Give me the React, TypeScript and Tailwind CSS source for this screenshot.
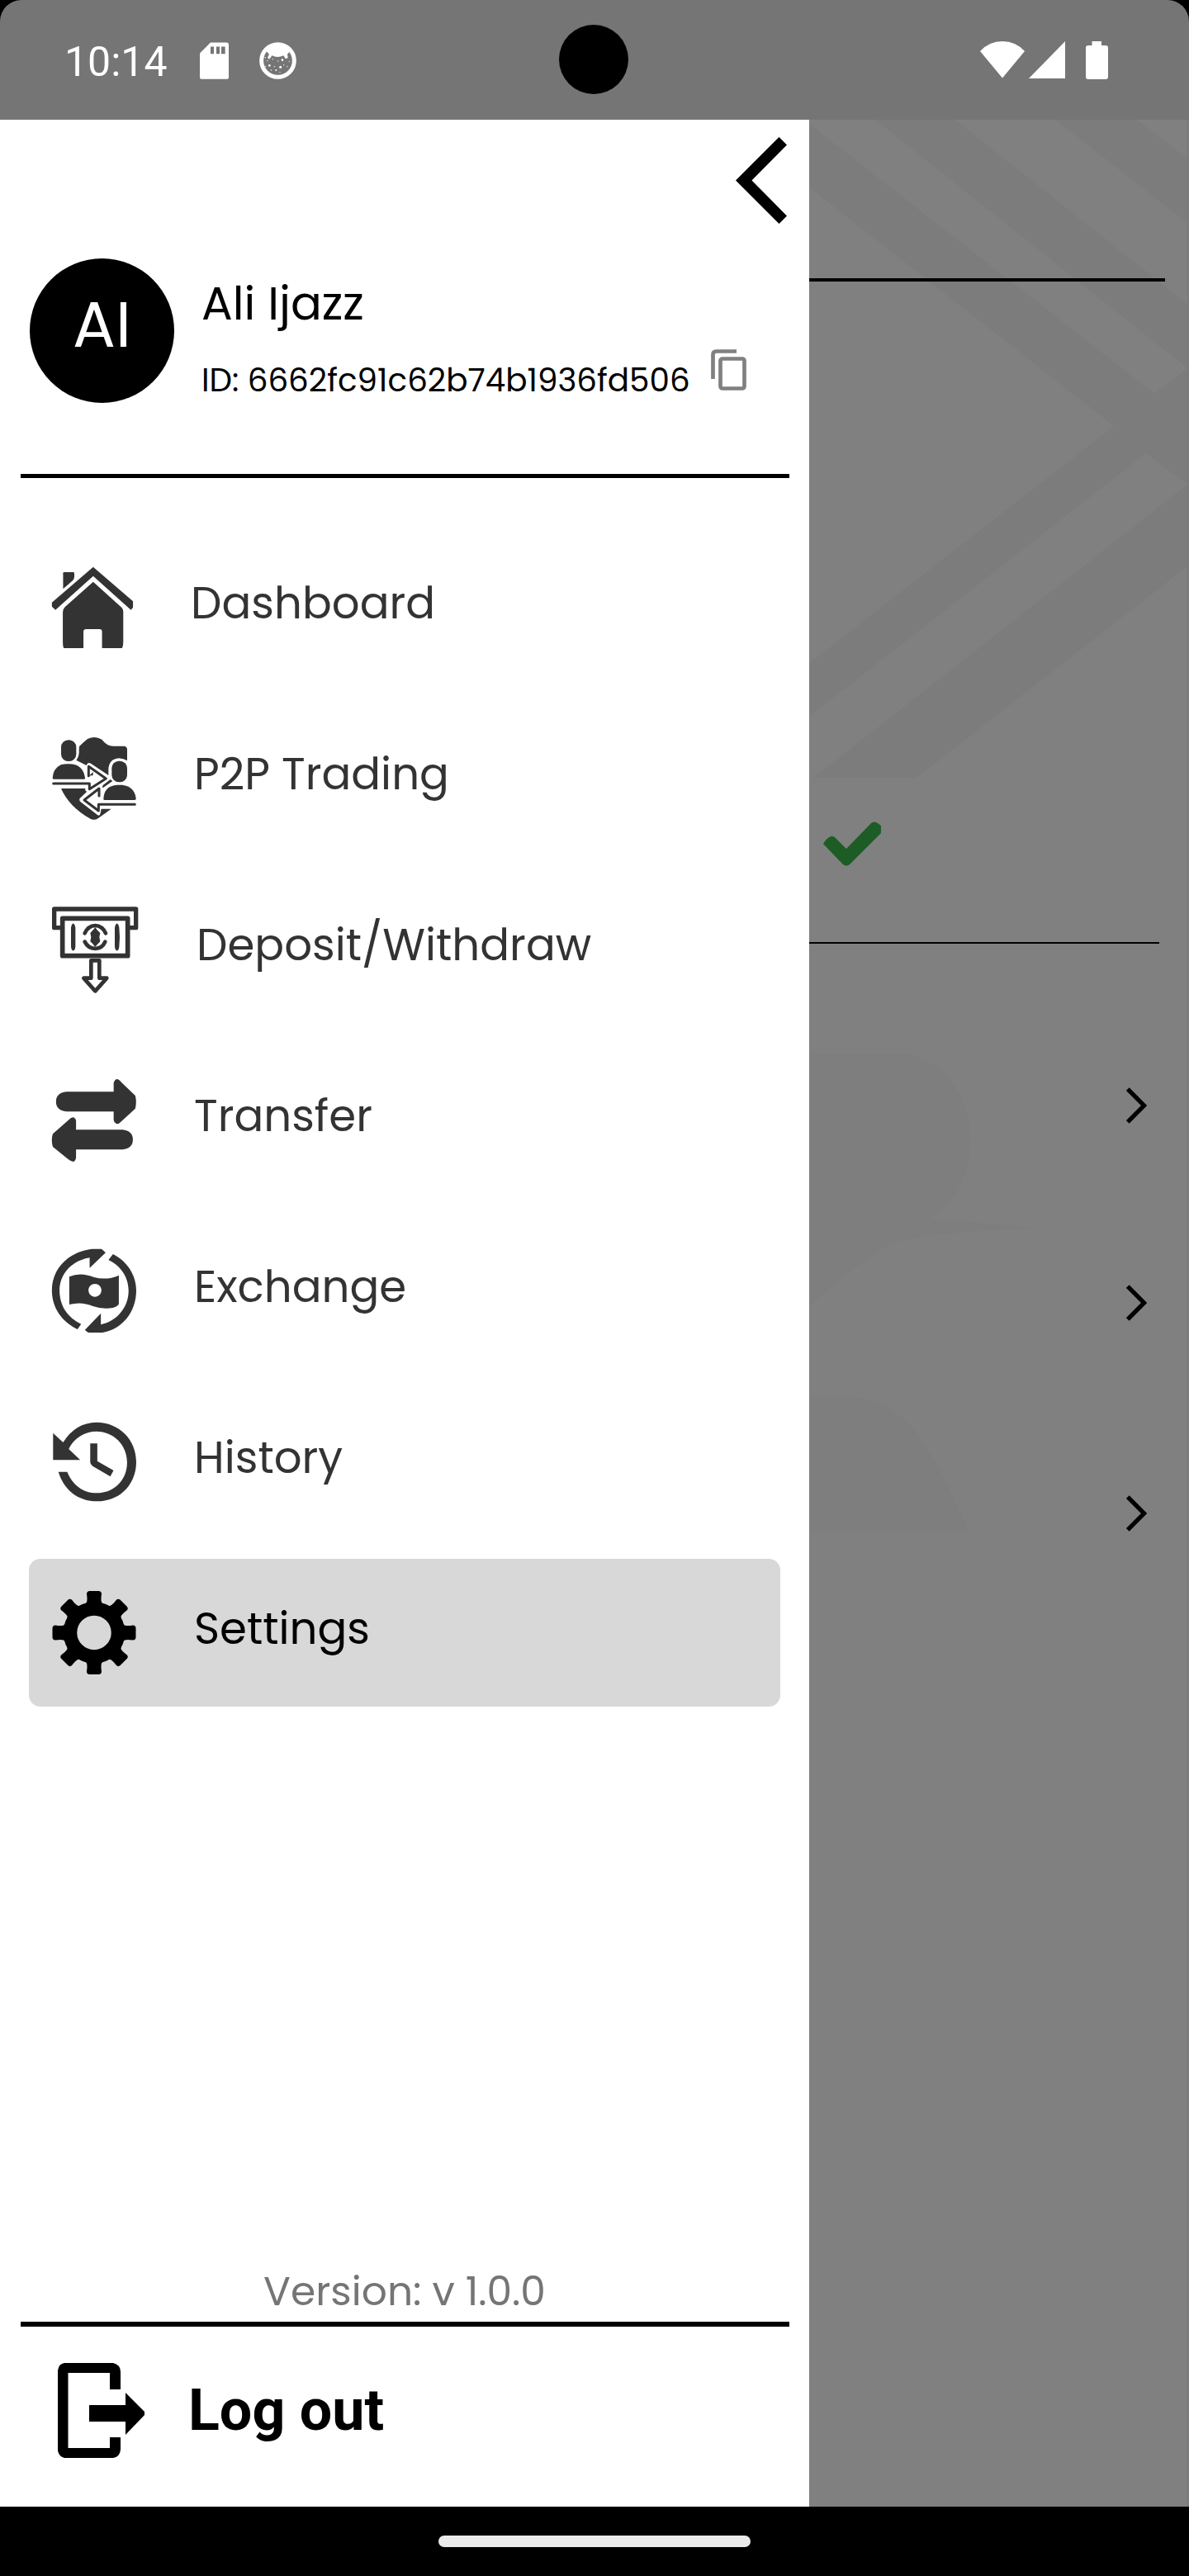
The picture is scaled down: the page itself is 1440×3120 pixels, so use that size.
import type { ReactNode } from "react";

const poppins = "font-['Poppins','Inter',sans-serif]";

function Slot({ children }: { children: ReactNode }) {
  return (
    <svg viewBox="0 0 106 106" className="h-[106px] w-[106px] shrink-0 overflow-visible" fill="currentColor">
      {children}
    </svg>
  );
}

function HomeIcon() {
  return (
    <Slot>
      <g transform="translate(-63 -24) scale(.35714 .33333)">
        <path d="M214 103q0-4 4-4h30q4 0 4 4v12q0 8-5 14l-33 31z" />
        <path d="M316 80l135 125v22l-7 9L316 113 188 236l-12-12v-15z" />
        <path d="M316 134l97 94q5 6 5 14v112q0 14-4 21h-68v-60q0-9-8-9h-46q-9 0-9 9v60h-67q-3-7-3-20V244q0-10 7-18z" />
      </g>
    </Slot>
  );
}

function TradingIcon() {
  return (
    <Slot>
      <g transform="translate(-13 -11) scale(.33333)">
        <path d="M138 72q18-18 30-27 28-13 52 2 18 24 42 24h38q12 1 12 12v41q-12-8-30-9-36 3-38 40v22l-64-43q-12-6-16 7l-37-19q12-14 10-38z" />
        <path d="M72 225h88q-2 10 6 11l-26 25q-4 6 3 13l62 48q8 5 10-8l3-15h36q-30 22-46 33-16 12-32 2Q100 290 72 225z" />
        <rect x="72" y="49" width="55" height="77" rx="26" />
        <path d="M41 187q2-34 30-48 14-4 30-3 50 0 58 50 1 6-4 5H45q-4 0-4-4z" />
        <rect x="256" y="125" width="56" height="77" rx="26" />
        <path d="M226 263q2-48 50-51h18q46 6 50 50 0 5-5 5H230q-4 0-4-4z" />
        <path d="M44 207h131v20l60-38-63-44v34" fill="none" stroke="currentColor" strokeWidth="9" strokeLinecap="round" strokeLinejoin="round" />
        <path d="M174 179l14-14v12z" />
        <path d="M340 283H208v23l-52-39 54-42v27" fill="none" stroke="currentColor" strokeWidth="9" strokeLinecap="round" strokeLinejoin="round" />
        <path d="M251 192l8 6-34 24-4-2 4-8z" />
      </g>
    </Slot>
  );
}

function DepositIcon() {
  return (
    <Slot>
      <g transform="translate(-13 -218) scale(.33333)">
        <path d="M77 731H47V663H344v68H314" fill="none" stroke="currentColor" strokeWidth="16" strokeLinejoin="round" />
        <rect x="77" y="697" width="237" height="136" fill="none" stroke="currentColor" strokeWidth="17" strokeLinejoin="round" />
        <path d="M116 715q8 5 8 15v70q0 10-8 15-8-5-8-15v-70q0-10 8-15zM275 715q8 5 8 15l2 35-2 35q0 10-8 15-8-5-8-15v-70q0-10 8-15z" />
        <path d="M158 751q12-27 38-28 26 1 38 28" fill="none" stroke="currentColor" strokeWidth="14" strokeLinecap="round" />
        <path d="M158 782q12 24 38 25 26-1 36-25" fill="none" stroke="currentColor" strokeWidth="14" strokeLinecap="round" />
        <path d="M196 730q8 12 18 20l-3 15 3 16q-12 12-18 20-8-12-18-20l3-16-3-15q12-12 18-20z" />
        <path d="M181 850h30v64h27l-42 47-42-47h27z" fill="none" stroke="currentColor" strokeWidth="14" strokeLinejoin="round" />
      </g>
    </Slot>
  );
}

function TransferIcon() {
  return (
    <Slot>
      <g transform="translate(-63 -235) scale(.48469 .33333)">
        <path d="M166 757H284V725q2-12 8-14 5 0 11 11l35 49q4 22 0 47l-36 48q-6 9-10 8-8-6-8-16V829H166q-26-4-26-36t26-36z" />
        <path d="M306 895H190V862q-2-11-8-12-6 2-10 9L132 910q-5 22 0 47l39 46q8 9 13 8 6-4 6-18V967H306q26-4 26-36t-26-36z" />
      </g>
    </Slot>
  );
}

function ExchangeIcon() {
  return (
    <Slot>
      <g transform="translate(-63 -22) scale(.35714 .33333)">
        <path d="M263 360C210 332 176 282 176 218 176 140 232 78 312 68h32q8 6 14 14l-54 55V100C244 110 202 158 202 220c0 56 28 98 73 121z" />
        <path d="M383 87c46 24 79 74 79 132 0 80-50 142-114 153h-48q-8-4-12-10l54-60v41c54-12 94-62 94-123 0-48-26-91-68-112z" />
        <path fillRule="evenodd" d="M235 169q38-18 84 2 44 12 84-7V268q-4 10-20 14-36 6-68-6-38-18-80-6zM322 195c-12 0-22 10-22 23s10 24 22 24 22-11 22-24-10-23-22-23z" />
      </g>
    </Slot>
  );
}

function HistoryIcon() {
  return (
    <Slot>
      <g transform="translate(-63 -229) scale(.35714 .33333)">
        <path d="M180 737l34 34q42-72 113-73c76 0 135 62 135 144 0 80-54 143-132 143-68 0-114-44-132-107h30c18 48 54 77 100 77 58 0 103-46 103-111 0-64-46-113-104-113-40 0-76 24-94 64l39 40H180z" />
        <path d="M306 775h24v64l55 34-11 22-60-38q-8-6-8-14z" />
      </g>
    </Slot>
  );
}

const gearTeeth = [0, 45, 90, 135, 180, 225, 270, 315];

function SettingsIcon() {
  return (
    <Slot>
      <g transform="translate(51 51.4)">
        <circle r="29" fill="none" stroke="currentColor" strokeWidth="16.5" />
        {gearTeeth.map((angle) => (
          <path
            key={angle}
            transform={`rotate(${angle})`}
            d="M-9-47q0-3 3-3.500H6q3 .5 3 3.500q-1 7 0 10 2 3 9 5L10-28H-10L-18-32q7-2 9-5 1-3 0-10z"
          />
        ))}
      </g>
    </Slot>
  );
}

const items = [
  { label: "Dashboard", icon: <HomeIcon />, text: "ml-[62px]" },
  { label: "P2P Trading", icon: <TradingIcon />, text: "ml-[66px]" },
  { label: "Deposit/Withdraw", icon: <DepositIcon />, text: "ml-[69px]" },
  { label: "Transfer", icon: <TransferIcon />, text: "ml-[66px]" },
  { label: "Exchange", icon: <ExchangeIcon />, text: "ml-[66px]" },
  { label: "History", icon: <HistoryIcon />, text: "ml-[66px]" },
  { label: "Settings", icon: <SettingsIcon />, text: "ml-[66px]", active: true },
];

function StatusBar() {
  return (
    <div className="relative bg-black">
      <div className="flex h-[145px] items-center rounded-t-[26px] bg-[#757575] pb-px text-white">
        <span className="ml-[78px] mt-[5px] w-[130px] font-['Roboto',sans-serif] text-[50px] leading-none">10:14</span>
        <svg viewBox="36 32 105 134" className="ml-[34px] mt-[2px] h-[45px] w-[35px]">
          <path fill="#fff" d="M75 33h58q8 0 8 8v117q0 8-8 8H44q-8 0-8-8V72z" />
          <path fill="#757575" d="M75 48h12v26H75zM96 48h12v26H96zM114 48h14v26h-14z" />
        </svg>
        <svg viewBox="252 32 135 135" className="ml-[37px] mt-[2px] h-[45px] w-[45px]">
          <circle cx="319.500" cy="99.500" r="59.500" fill="none" stroke="#fff" strokeWidth="15" />
          <path fill="#fff" d="M278 64q20-26 42-26t44 26l-10 13 2 12-8 4-8-12q-22 10-42 0l-8 12q-8 0-7-7l5-9z" />
          <g fill="#fff">
            <circle cx="274" cy="88" r="2" />
            <circle cx="282" cy="100" r="2" />
            <circle cx="289" cy="117" r="4" />
            <circle cx="275" cy="120" r="2" />
            <circle cx="301" cy="94" r="2" />
            <circle cx="320" cy="101" r="2" />
            <circle cx="336" cy="97" r="4" />
            <circle cx="329" cy="123" r="4.500" />
            <circle cx="307" cy="121" r="2" />
            <circle cx="313" cy="134" r="3" />
            <circle cx="295" cy="134" r="2" />
            <circle cx="341" cy="115" r="2" />
            <circle cx="354" cy="121" r="2" />
            <circle cx="361" cy="102" r="2" />
            <circle cx="327" cy="141" r="2" />
          </g>
        </svg>
        <svg viewBox="0 0 54 45" className="ml-auto mt-px h-[45px] w-[54px]" fill="#fff">
          <path d="M0 12Q11 0 27 0T54 12L27 44.500z" />
        </svg>
        <svg viewBox="0 0 44 45" className="ml-[5px] mt-px h-[45px] w-[44px]" fill="#fff">
          <path d="M44 0V45H0z" />
        </svg>
        <svg viewBox="0 0 27 46" className="ml-[25px] mr-[98px] mt-px h-[46px] w-[27px]" fill="#fff">
          <path d="M7.500 0h11.500v5h5q3 0 3 3v35q0 3-3 3H3q-3 0-3-3V8q0-3 3-3h4.500z" />
        </svg>
      </div>
      <div className="absolute left-[677px] top-[30px] h-[84px] w-[84px] rounded-full bg-black" />
    </div>
  );
}

function Drawer() {
  return (
    <aside className="flex w-[980px] shrink-0 flex-col bg-white">
      <svg viewBox="0 0 62 105" className="mr-[27px] mt-[21px] h-[105px] w-[62px] self-end">
        <path d="M52.500 0L62 9.500 19.500 52.500 62 95.500 52.500 105 0 52.500z" />
      </svg>

      <div className="mt-[42px] flex h-[175px] pl-9">
        <div className={`flex h-[175px] w-[175px] items-center justify-center rounded-full bg-black pb-[15px] text-[77px] leading-none text-white ${poppins}`}>
          AI
        </div>
        <div className={`ml-[34px] text-black ${poppins}`}>
          <p className="-ml-px mt-[25px] h-[60px] text-[56px] leading-[60px]">Ali Ijazz</p>
          <div className="mt-[38px] flex">
            <p className="-ml-px w-[615px] whitespace-nowrap text-[38.9px] leading-[50px]">
              ID: 6662fc91c62b74b1936fd506
            </p>
            <svg viewBox="0 0 43 50" className="-mt-[13px] ml-[2px] h-[50px] w-[43px]" fill="none" stroke="#808080" strokeWidth="4.700">
              <path d="M31 2.500H6.500q-4 0-4 4V36" />
              <rect x="11.500" y="11.500" width="29" height="36" rx="2.500" />
            </svg>
          </div>
        </div>
      </div>

      <div className="ml-[25px] mr-6 mt-[86px] h-[5px] bg-black" />

      <nav className="mt-[67px] flex flex-col gap-7 pl-[35px] pr-[35px]">
        {items.map(({ label, icon, text, active }) => (
          <a
            key={label}
            className={`flex h-[179px] rounded-[14px] pl-7 ${active ? "bg-[#d8d8d8] text-black" : "text-[#333]"}`}
          >
            <div className="pt-[38px]">{icon}</div>
            <span className={`self-center whitespace-nowrap pb-[11px] text-[53px] leading-none ${text} ${poppins}`}>{label}</span>
          </a>
        ))}
      </nav>

      <p className={`mt-auto text-center text-[48.7px] leading-[60px] text-[#757575] ${poppins}`}>Version: v 1.0.0</p>
      <div className="ml-[25px] mr-6 mt-[7px] h-[6px] bg-black" />
      <div className="flex h-[218px] items-center pb-[15px] pl-[70px] text-black">
        <svg viewBox="0 0 105 115" className="h-[115px] w-[105px]">
          <path d="M8 0H67q9 2 9 11v21H63V12H12.500V103H63V90H76v15q-1 9-9 10H8q-7-2-8-9V9Q1 1 8 0z" />
          <path d="M38 51H82V36L105 59q1 2 0 4L82 87V71H38z" />
        </svg>
        <span className="ml-[53px] pb-0.5 font-['Roboto',sans-serif] text-[70px] font-bold leading-none">Log out</span>
      </div>
    </aside>
  );
}

function RowChevron() {
  return (
    <svg viewBox="0 0 25 44" className="mr-[51px] h-11 w-[25px] self-end" fill="none" stroke="#000" strokeWidth="5.200">
      <path d="M1.800 2L21.500 22 1.800 42" />
    </svg>
  );
}

function DimmedPage() {
  return (
    <main className="relative flex-1 overflow-hidden bg-[#808080]">
      <svg viewBox="980 145 460 2891" className="absolute inset-0 h-[2891px] w-[460px]">
        <g fill="#7c7c7c">
          <path d="M980 150L1398 476.500 1438 446V587L1388 549 980 868V803.500L1349 516 980 227z" />
          <path d="M1060 145H1157L1438 368.500V446z" />
          <path d="M1278 145H1377L1438 192V270z" />
          <path d="M1438 587V686L1110 942H985z" />
        </g>
        <g fill="#7e7e7e">
          <path d="M980 1276H1093C1140 1280 1175 1325 1175 1379 1175 1425 1155 1461 1125 1475.500L1253 1487Q1130 1493 1087 1503.500 1050 1520 980 1581.700z" />
          <path d="M980 1691H1027C1072 1696 1100 1718 1120 1749Q1146 1792 1173 1855H980z" />
        </g>
        <path d="M1439 145V3036" stroke="#7a7a7a" strokeWidth="2" />
      </svg>
      <div className="relative flex h-full flex-col">
        <div className="mr-[29px] mt-[192px] h-[4px] bg-black" />
        <svg viewBox="0 0 70 54" className="ml-[17px] mt-[654px] h-[54px] w-[70px]">
          <path fill="#1e5c25" d="M0 27Q4 20 9 18 12 17 15 20L28 33 58 2q4-3 8 0l4 3v9L32 52q-4 3-8 0z" />
        </svg>
        <div className="mr-9 mt-[92px] h-[2px] bg-black" />
        <div className="mt-[174px] flex flex-col">
          <RowChevron />
          <div className="h-[195px]" />
          <RowChevron />
          <div className="h-[211px]" />
          <RowChevron />
        </div>
      </div>
    </main>
  );
}

export default function App() {
  return (
    <div className="flex h-[3120px] w-[1440px] flex-col overflow-hidden bg-black">
      <StatusBar />
      <div className="flex h-[2891px]">
        <Drawer />
        <DimmedPage />
      </div>
      <div className="flex h-[84px] justify-center pt-[35px]">
        <div className="h-[14px] w-[378px] rounded-full bg-[#ebebeb]" />
      </div>
    </div>
  );
}
